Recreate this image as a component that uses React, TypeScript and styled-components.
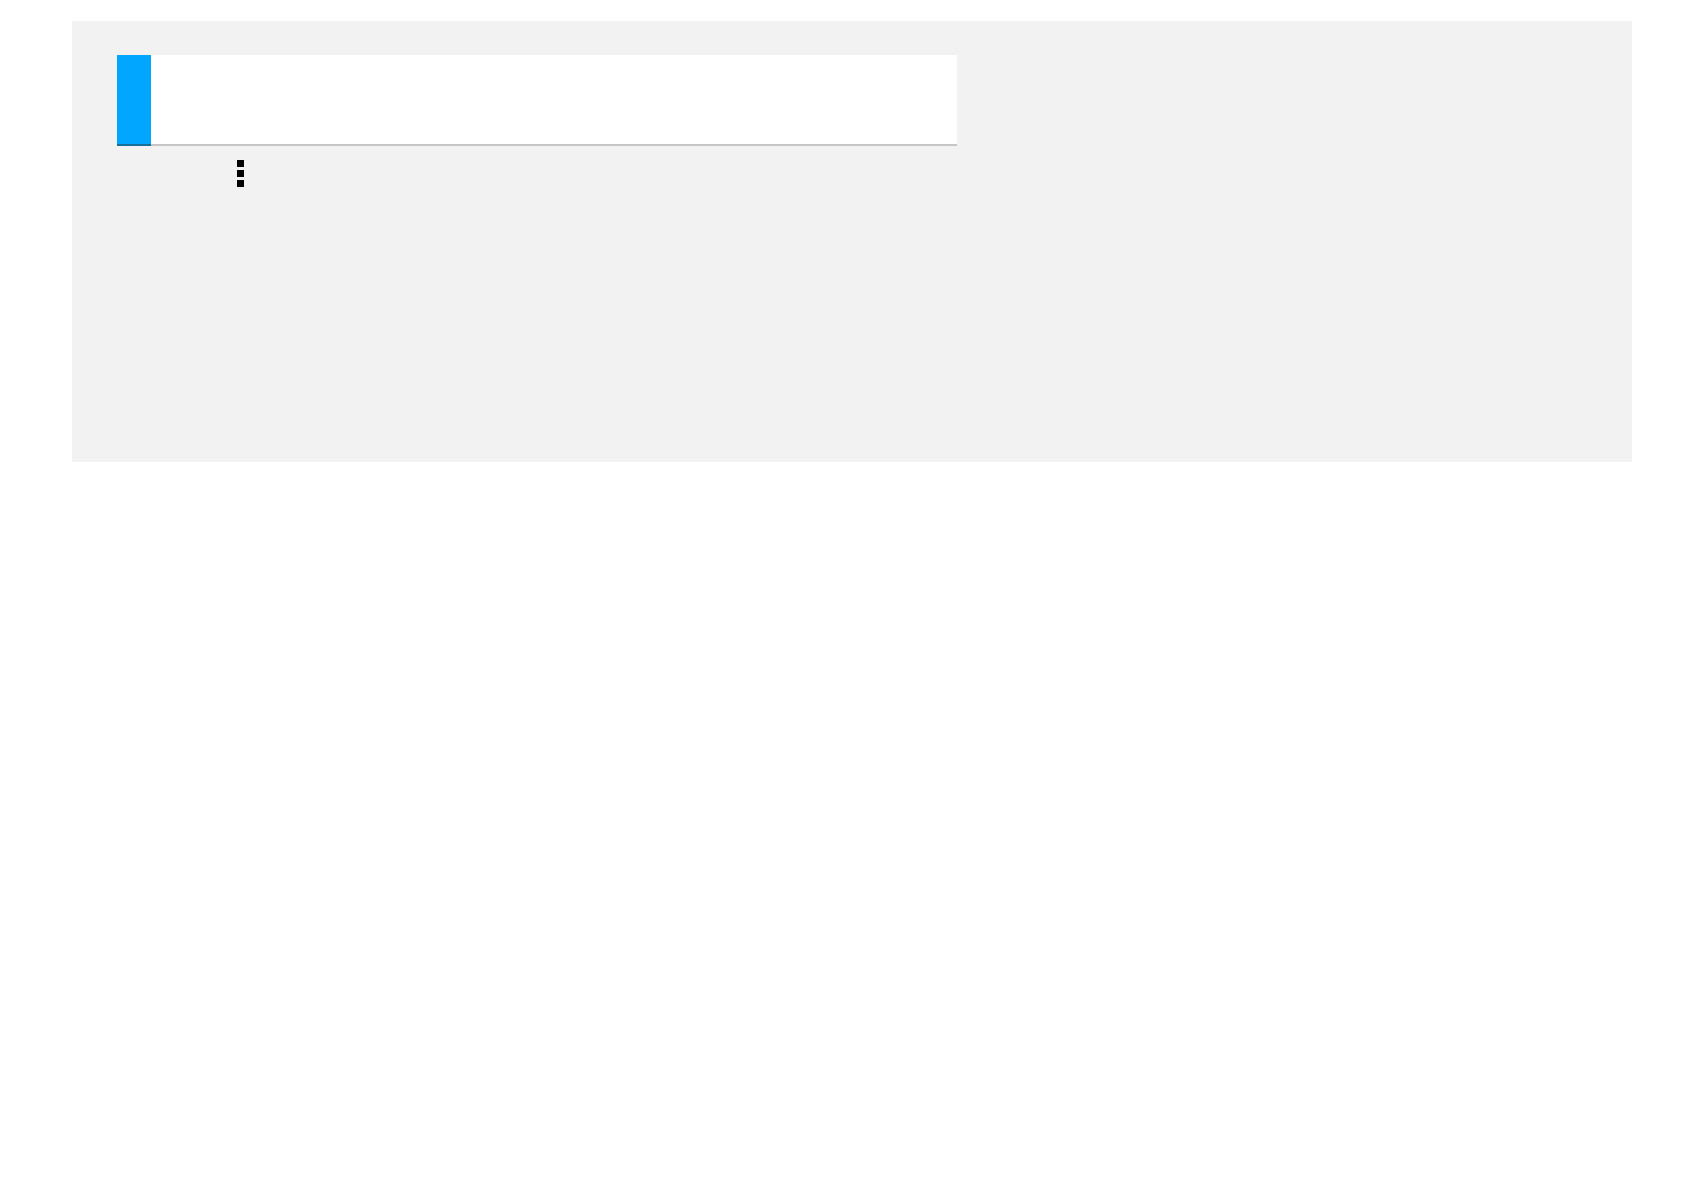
import styled, { createGlobalStyle } from 'styled-components';

const GlobalStyle = createGlobalStyle`
	html, body {
		margin: 0;
		padding: 0;
		background: #ffffff;
		font-family: 'Liberation Sans', Arial, sans-serif;
	}
`;

export default function App() {
	return (
		<>
			<GlobalStyle />
			<Panel>
				<Header>
					<AccentBar />
					<TitleArea />
				</Header>
				<MenuRow>
					<MoreButton aria-label="more">
						<svg width="7" height="27" viewBox="0 0 7 27">
							<rect x="0" y="0" width="7" height="7" fill="#000" />
							<rect x="0" y="10" width="7" height="7" fill="#000" />
							<rect x="0" y="20" width="7" height="7" fill="#000" />
						</svg>
					</MoreButton>
				</MenuRow>
			</Panel>
		</>
	);
}

const Panel = styled.div`
	box-sizing: border-box;
	margin: 21px 0 0 72px;
	width: 1560px;
	height: 441px;
	padding: 34px 45px;
	background: #f2f2f2;
`;

const Header = styled.div`
	display: flex;
	width: 840px;
	height: 91px;
`;

const AccentBar = styled.div`
	width: 34px;
	background: #00a6ff;
	border-bottom: 2px solid #1a6e9a;
`;

const TitleArea = styled.div`
	flex: 1;
	background: #ffffff;
	border-bottom: 2px solid #c6c6c6;
`;

const MenuRow = styled.div`
	display: flex;
	padding: 14px 0 0 120px;
`;

const MoreButton = styled.button`
	display: flex;
	padding: 0;
	border: 0;
	background: none;
	cursor: pointer;
`;
